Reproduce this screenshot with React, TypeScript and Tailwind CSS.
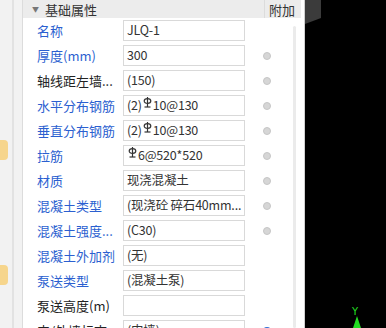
import React from "react";

type Row = { label: string; value: string; blue: boolean; dot?: "gray" | "blue" };

const rows: Row[] = [
  { label: "名称", value: "JLQ-1", blue: true },
  { label: "厚度(mm)", value: "300", blue: true, dot: "gray" },
  { label: "轴线距左墙...", value: "(150)", blue: false, dot: "gray" },
  { label: "水平分布钢筋", value: "(2)#10@130", blue: true, dot: "gray" },
  { label: "垂直分布钢筋", value: "(2)#10@130", blue: true, dot: "gray" },
  { label: "拉筋", value: "#6@520*520", blue: true, dot: "gray" },
  { label: "材质", value: "现浇混凝土", blue: true, dot: "gray" },
  { label: "混凝土类型", value: "(现浇砼 碎石40mm...", blue: true, dot: "gray" },
  { label: "混凝土强度...", value: "(C30)", blue: true, dot: "gray" },
  { label: "混凝土外加剂", value: "(无)", blue: true },
  { label: "泵送类型", value: "(混凝土泵)", blue: true },
  { label: "泵送高度(m)", value: "", blue: false },
  { label: "内/外墙标志", value: "(内墙)", blue: false, dot: "blue" },
];

function Rebar() {
  return (
    <svg width="9" height="11" viewBox="0 0 9 11" className="inline-block relative top-[-3px] mx-[1px]">
      <ellipse cx="4.5" cy="4" rx="3.3" ry="2.4" fill="none" stroke="#333" strokeWidth="1.2" />
      <line x1="4.5" y1="0" x2="4.5" y2="10" stroke="#333" strokeWidth="1.2" />
      <line x1="1.5" y1="10" x2="7.5" y2="10" stroke="#333" strokeWidth="1.2" />
    </svg>
  );
}

function Value({ v }: { v: string }) {
  const parts = v.split("#");
  if (parts.length === 1) return <>{v}</>;
  return (
    <>
      {parts[0]}
      <Rebar />
      {parts[1]}
    </>
  );
}

export default function App() {
  return (
    <div
      className="w-[386px] h-[328px] overflow-hidden flex bg-white text-[13px]"
      style={{ fontFamily: '"Noto Sans CJK SC", "Noto Sans", sans-serif' }}
    >
      {/* left strip */}
      <div className="relative w-[23px] h-full bg-[#f2f2f2] border-r border-[#dcdcdc] shrink-0">
        <div className="absolute left-[12px] top-0 w-[2px] h-full bg-[#e2e2e2]" />
        <div className="absolute left-0 top-[140px] w-[8px] h-[20px] bg-[#f6d58c] rounded-r-sm" />
        <div className="absolute left-0 top-[265px] w-[8px] h-[20px] bg-[#f6d58c] rounded-r-sm" />
      </div>
      {/* property panel */}
      <div className="w-[278px] shrink-0 flex flex-col">
        <div className="h-[18px] bg-[#ececec] flex items-center text-[#333] leading-none shrink-0">
          <span className="ml-[9px] text-[7px] text-[#777]">▼</span>
          <span className="ml-[6px]">基础属性</span>
          <span className="ml-auto mr-[6px] pl-[4px] border-l border-[#dcdcdc] h-full flex items-center">附加</span>
        </div>
        <div className="flex flex-1 min-h-0">
          <div className="flex flex-col w-[265px]">
            {rows.map((r, i) => (
              <div key={i} className="h-[25px] flex items-center shrink-0">
                <div
                  className={`w-[100px] pl-[14px] whitespace-nowrap overflow-hidden ${
                    r.blue ? "text-[#2b5fd0]" : "text-[#222]"
                  }`}
                >
                  {r.label}
                </div>
                <div className="w-[122px] h-[21px] border border-[#d9d9d9] flex items-center px-[3px] text-[12.5px] tracking-[-0.2px] text-[#333] whitespace-nowrap overflow-hidden">
                  <Value v={r.value} />
                </div>
                <div className="flex-1 flex justify-center">
                  {r.dot === "gray" && (
                    <div className="w-[8px] h-[8px] rounded-full bg-[#d6d6d6] border border-[#c6c6c6]" />
                  )}
                  {r.dot === "blue" && (
                    <div className="w-[8px] h-[8px] rounded-full bg-[#2f6fd6]" />
                  )}
                </div>
              </div>
            ))}
          </div>
          <div className="flex-1 flex justify-center pt-[8px]">
            <div className="w-[3px] h-full bg-[#ebebeb] rounded" />
          </div>
        </div>
      </div>
      <div className="w-[4px] shrink-0 bg-white border-r border-[#d0d0d0]" />
      {/* viewport */}
      <div className="relative flex-1 bg-black">
        <svg className="absolute left-0 top-0" width="20" height="30">
          <polygon points="0,0 16,0 16,18 0,24" fill="#3b3b3b" />
        </svg>
        <svg className="absolute left-[44px] top-[305px]" width="16" height="23">
          <text x="3" y="10" fontSize="10" fill="#22dd22" fontFamily="DejaVu Sans">Y</text>
          <polygon points="8,11 4,23 12,23" fill="#22dd22" />
        </svg>
      </div>
    </div>
  );
}
